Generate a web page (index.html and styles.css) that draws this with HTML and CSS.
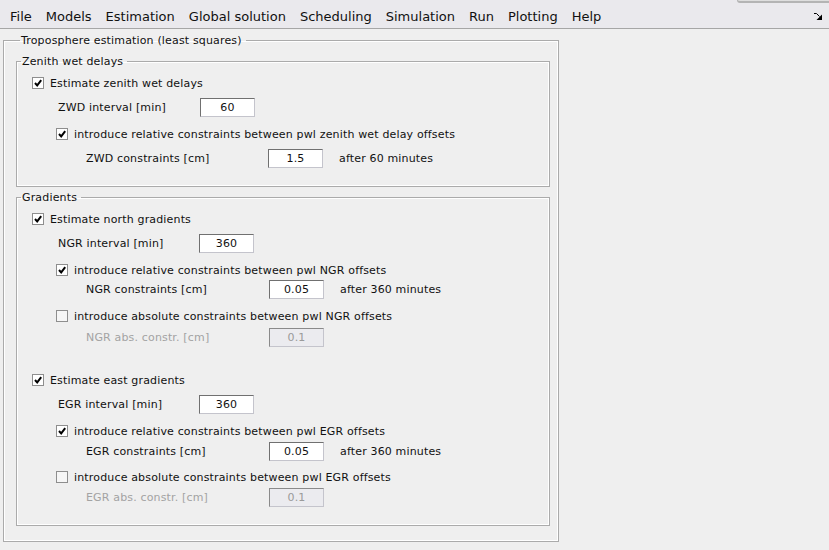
FILE: index.html
```
<!DOCTYPE html>
<html lang="en">
<head>
  <meta charset="UTF-8">
  <title>Troposphere estimation</title>
  <link rel="stylesheet" href="styles.css">
</head>
<body>
  <div class="menubar">
    <span class="menu">File</span>
    <span class="menu">Models</span>
    <span class="menu">Estimation</span>
    <span class="menu">Global solution</span>
    <span class="menu">Scheduling</span>
    <span class="menu">Simulation</span>
    <span class="menu">Run</span>
    <span class="menu">Plotting</span>
    <span class="menu">Help</span>
    <svg class="undock" width="8" height="7" viewBox="0 0 8 7">
      <path d="M0 0.5h2.5l3 3" stroke="#000" stroke-width="1" fill="none"/>
      <path d="M8 1.5v5.5H2.5z" fill="#000"/>
    </svg>
    <div class="corner"></div>
  </div>

  <fieldset class="panel outer">
    <legend>Troposphere estimation (least squares)</legend>

    <!-- zenith wet delays -->
    <fieldset class="panel inner zwd">
      <legend>Zenith wet delays</legend>
      <div class="row lv1 mt6"><span class="cb on"><svg viewBox="0 0 10 10"><path d="M2 5l2.2 2.4L8.2 2.2"/></svg></span>Estimate zenith wet delays</div>
      <div class="row lv2 mt6"><span class="lbl">ZWD interval [min]</span><span class="field">60</span></div>
      <div class="row lv2b mt9"><span class="cb on"><svg viewBox="0 0 10 10"><path d="M2 5l2.2 2.4L8.2 2.2"/></svg></span>introduce relative constraints between pwl zenith wet delay offsets</div>
      <div class="row lv3 mt6"><span class="lbl">ZWD constraints [cm]</span><span class="field">1.5</span><span class="after">after 60 minutes</span></div>
    </fieldset>

    <!-- gradients -->
    <fieldset class="panel inner grad">
      <legend>Gradients</legend>
      <div class="row lv1 mt6"><span class="cb on"><svg viewBox="0 0 10 10"><path d="M2 5l2.2 2.4L8.2 2.2"/></svg></span>Estimate north gradients</div>
      <div class="row lv2 mt6"><span class="lbl">NGR interval [min]</span><span class="field">360</span></div>
      <div class="row lv2b mt9"><span class="cb on"><svg viewBox="0 0 10 10"><path d="M2 5l2.2 2.4L8.2 2.2"/></svg></span>introduce relative constraints between pwl NGR offsets</div>
      <div class="row lv3 mt1"><span class="lbl">NGR constraints [cm]</span><span class="field">0.05</span><span class="after">after 360 minutes</span></div>
      <div class="row lv2b mt9"><span class="cb"></span>introduce absolute constraints between pwl NGR offsets</div>
      <div class="row lv3 mt3 off"><span class="lbl">NGR abs. constr. [cm]</span><span class="field">0.1</span></div>

      <div class="row lv1 mt25"><span class="cb on"><svg viewBox="0 0 10 10"><path d="M2 5l2.2 2.4L8.2 2.2"/></svg></span>Estimate east gradients</div>
      <div class="row lv2 mt6"><span class="lbl">EGR interval [min]</span><span class="field">360</span></div>
      <div class="row lv2b mt9"><span class="cb on"><svg viewBox="0 0 10 10"><path d="M2 5l2.2 2.4L8.2 2.2"/></svg></span>introduce relative constraints between pwl EGR offsets</div>
      <div class="row lv3 mt2"><span class="lbl">EGR constraints [cm]</span><span class="field">0.05</span><span class="after">after 360 minutes</span></div>
      <div class="row lv2b mt8"><span class="cb"></span>introduce absolute constraints between pwl EGR offsets</div>
      <div class="row lv3 mt2 off"><span class="lbl">EGR abs. constr. [cm]</span><span class="field">0.1</span></div>
    </fieldset>
  </fieldset>
</body>
</html>
```
FILE: styles.css
```
body {
  margin: 0;
  background: #efefef;
  font-family: "DejaVu Sans", sans-serif;
  font-size: 11px;
  letter-spacing: 0.16px;
  color: #111;
}

/* menu bar */
.menubar {
  position: relative;
  display: flex;
  align-items: center;
  height: 23px;
  padding: 5px 0 0 3px;
  background: #eae9ed;
  border-bottom: 1px solid #a6a6a6;
  font-size: 13px;
  letter-spacing: 0;
}
.menu {
  padding: 0 7px;
  line-height: 23px;
}
.undock {
  margin-left: auto;
  margin-right: 7px;
}
.corner {
  position: absolute;
  top: 0;
  right: 0;
  width: 91px;
  height: 1px;
  background: #dedede;
  border-left: 1px solid #b4b4b4;
  border-bottom: 2px solid #b4b4b4;
  border-bottom-left-radius: 3px;
}

/* etched panels */
.panel {
  margin: 0;
  padding: 0;
  min-width: 0;
  border: 1px solid #ababab;
  box-shadow: inset 0 0 0 1px #fff;
}
.panel legend {
  margin-left: 4px;
  padding: 2px 4px 0 1px;
  line-height: 12px;
  font-size: 11px;
}
.outer {
  margin: 4px 0 0 3px;
  width: 556px;
  box-sizing: border-box;
  padding: 7px 8px 15px 12px;
}
.inner {
  width: 534px;
  box-sizing: border-box;
}
.zwd { padding-bottom: 19px; }
.grad { margin-top: 3px; padding-bottom: 19px; }

/* rows */
.row {
  display: flex;
  align-items: center;
  height: 18px;
  white-space: nowrap;
}
.lv1 { padding-left: 15px; }
.lv2 { padding-left: 41px; }
.lv2b { padding-left: 39px; }
.lv3 { padding-left: 69px; }
.lv2 .lbl { width: 142px; }
.lv3 .lbl { width: 182px; }
.grad .lv2 .lbl { width: 141px; }
.grad .lv3 .lbl { width: 183px; }

.mt1 { margin-top: 1px; }
.mt2 { margin-top: 2px; }
.mt3 { margin-top: 3px; }
.mt6 { margin-top: 6px; }
.mt8 { margin-top: 8px; }
.mt9 { margin-top: 9px; }
.mt25 { margin-top: 25px; }

/* checkbox */
.cb {
  width: 10px;
  height: 10px;
  margin-right: 6px;
  border: 1px solid #8e8e8e;
  background: #f6f6f6;
  flex: none;
}
.cb.on { background: #fff; }
.cb svg {
  display: block;
  width: 10px;
  height: 10px;
}
.cb path {
  fill: none;
  stroke: #000;
  stroke-width: 2;
}

/* text fields */
.field {
  width: 53px;
  height: 17px;
  line-height: 17px;
  text-align: center;
  background: #fff;
  border: 1px solid #c4c4cc;
  border-top-color: #707070;
  border-left-color: #707070;
  flex: none;
}
.after { margin-left: 16px; }
.off { color: #a3a3a3; }
.off .field {
  background: #ebebef;
  color: #9a9a9a;
  border-top-color: #8a8a8a;
  border-left-color: #8a8a8a;
}
```
